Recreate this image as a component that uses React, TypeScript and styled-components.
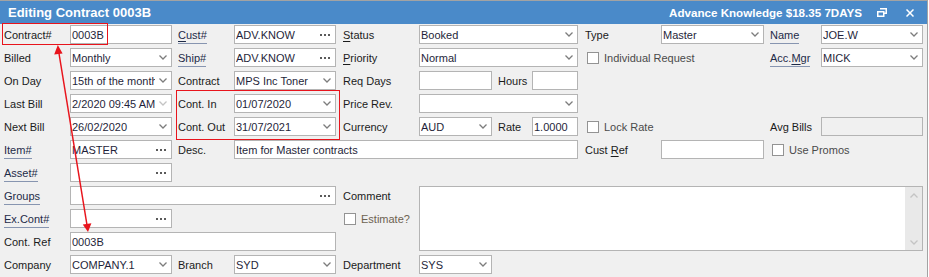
import React from "react";
import styled, { createGlobalStyle } from "styled-components";

const GlobalStyle = createGlobalStyle`
  html, body {
    margin: 0;
    padding: 0;
    background: #ffffff;
  }
  body {
    font-family: "Liberation Sans", Arial, sans-serif;
  }
`;

const colors = {
  titleBlue: "#4a8ac9",
  panel: "#f0f0f0",
  frame: "#a3a3a3",
  stroke: "#b4b4b4",
  text: "#1b1b1b",
  value: "#1f1f3a",
  link: "#1e2b48",
  linkLine: "#8795b0",
  red: "#e8141c",
};

const Window = styled.div`
  position: relative;
  width: 927px;
  height: 276px;
  box-sizing: content-box;
  border-top: 1px solid ${colors.frame};
  border-right: 1px solid ${colors.frame};
  border-bottom: 1px solid ${colors.frame};
  background: ${colors.panel};
  overflow: hidden;
`;

const TitleBar = styled.div`
  height: 23px;
  display: flex;
  align-items: center;
  padding: 0 13px 0 8px;
  background: ${colors.titleBlue};
  color: #ffffff;
`;

const TitleText = styled.div`
  flex: 1;
  font-size: 13px;
  font-weight: 700;
`;

const TitleInfo = styled.div`
  font-size: 11.6px;
  font-weight: 700;
  margin-right: 15px;
`;

const TitleButton = styled.div<{ $gap: number }>`
  height: 12px;
  display: flex;
  align-items: center;
  margin-left: ${(p) => p.$gap}px;
`;

const Form = styled.div`
  display: grid;
  grid-template-columns: 66px 102px 6px 56px 102px 7px 76px 159px 7px 76px 103px 6px 51px 102px;
  grid-template-rows: repeat(11, 19px);
  row-gap: 4px;
  padding: 1px 0 0 4px;
`;

const Label = styled.div<{ $c: string; $r: number }>`
  grid-column: ${(p) => p.$c};
  grid-row: ${(p) => p.$r};
  display: flex;
  align-items: center;
  font-size: 11px;
  color: ${colors.text};
  white-space: nowrap;
`;

const LinkText = styled.span`
  color: ${colors.link};
  border-bottom: 1px solid ${colors.linkLine};
  line-height: 13px;
  padding-bottom: 1px;
  margin-top: 3px;
`;

const Accel = styled.span`
  text-decoration: underline;
  text-underline-offset: 2px;
`;

const Field = styled.div<{ $c?: string; $r?: number; $w?: number; $disabled?: boolean }>`
  grid-column: ${(p) => p.$c ?? "auto"};
  grid-row: ${(p) => p.$r ?? "auto"};
  width: ${(p) => (p.$w ? `${p.$w}px` : "auto")};
  flex: ${(p) => (p.$w ? "none" : "1")};
  box-sizing: border-box;
  height: 19px;
  display: flex;
  align-items: center;
  border: 1px solid ${colors.stroke};
  background: ${(p) => (p.$disabled ? "#f0f0f0" : "#ffffff")};
  padding-left: 1px;
  overflow: hidden;
`;

const Value = styled.span`
  flex: 1;
  min-width: 0;
  overflow: hidden;
  white-space: nowrap;
  font-size: 11px;
  color: ${colors.value};
`;

const ArrowSlot = styled.span`
  width: 16px;
  height: 17px;
  display: flex;
  align-items: center;
  justify-content: center;
  background: #ffffff;
`;

const Dots = styled.span`
  width: 16px;
  display: flex;
  gap: 2px;
  align-items: center;
  justify-content: center;
  margin-right: 2px;

  & > i {
    width: 2px;
    height: 2px;
    background: #5a5a5a;
  }
`;

const Split = styled.div<{ $c: string; $r: number }>`
  grid-column: ${(p) => p.$c};
  grid-row: ${(p) => p.$r};
  display: flex;
  align-items: center;
`;

const SubLabel = styled.span`
  width: 40px;
  padding-left: 6px;
  box-sizing: border-box;
  font-size: 11px;
  color: ${colors.text};
`;

const Check = styled.label<{ $c: string; $r: number; $indent: number; $muted?: boolean }>`
  grid-column: ${(p) => p.$c};
  grid-row: ${(p) => p.$r};
  display: flex;
  align-items: center;
  gap: 5px;
  padding-left: ${(p) => p.$indent}px;
  font-size: 11px;
  color: ${(p) => (p.$muted ? "#6d6250" : "#4a4a4a")};
  white-space: nowrap;
`;

const Box = styled.span`
  width: 12px;
  height: 12px;
  box-sizing: border-box;
  border: 1px solid #939393;
  background: #ffffff;
`;

const Memo = styled.div`
  grid-column: 8 / 15;
  grid-row: 8 / 11;
  display: flex;
  justify-content: flex-end;
  border: 1px solid ${colors.stroke};
  background: #ffffff;
`;

const ScrollTrack = styled.div`
  width: 17px;
  display: flex;
  flex-direction: column;
  justify-content: space-between;
  align-items: center;
  padding: 6px 0 5px;
  background: #e9e9e9;
`;

const Overlay = styled.svg`
  position: absolute;
  left: 0;
  top: 0;
  width: 929px;
  height: 277px;
  pointer-events: none;
`;

const RedBox = styled.div<{ $x: number; $y: number; $w: number; $h: number }>`
  position: absolute;
  left: ${(p) => p.$x}px;
  top: ${(p) => p.$y}px;
  width: ${(p) => p.$w}px;
  height: ${(p) => p.$h}px;
  box-sizing: border-box;
  border: 1px solid ${colors.red};
  pointer-events: none;
`;

const Chevron = ({ up, dim }: { up?: boolean; dim?: boolean }) => (
  <svg width="8" height="5" viewBox="0 0 8 5">
    <path
      d={up ? "M0.5 4.5 L4 1 L7.5 4.5" : "M0.5 0.5 L4 4 L7.5 0.5"}
      fill="none"
      stroke={dim ? "#c4c4c4" : "#7d7d7d"}
      strokeWidth="1.3"
    />
  </svg>
);

type Place = { c: string; r: number };

const Select = ({ value = "", c, r, w, dim }: Partial<Place> & { value?: string; w?: number; dim?: boolean }) => (
  <Field $c={c} $r={r} $w={w}>
    <Value>{value}</Value>
    <ArrowSlot>
      <Chevron dim={dim} />
    </ArrowSlot>
  </Field>
);

const Lookup = ({ value = "", c, r }: Place & { value?: string }) => (
  <Field $c={c} $r={r}>
    <Value>{value}</Value>
    <Dots>
      <i />
      <i />
      <i />
    </Dots>
  </Field>
);

const Text = ({ value = "", c, r, w, disabled }: Partial<Place> & { value?: string; w?: number; disabled?: boolean }) => (
  <Field $c={c} $r={r} $w={w} $disabled={disabled}>
    <Value>{value}</Value>
  </Field>
);

const App = (): JSX.Element => {
  return (
    <>
      <GlobalStyle />
      <Window>
        <TitleBar>
          <TitleText>Editing Contract 0003B</TitleText>
          <TitleInfo>Advance Knowledge $18.35 7DAYS</TitleInfo>
          <TitleButton $gap={0}>
            <svg width="10" height="9" viewBox="0 0 10 9">
              <path d="M3 0.75 H9.25 V5.25 H7" fill="none" stroke="#fff" strokeWidth="1.5" />
              <rect x="0.75" y="3.75" width="6" height="4.5" fill="none" stroke="#fff" strokeWidth="1.5" />
            </svg>
          </TitleButton>
          <TitleButton $gap={19}>
            <svg width="8" height="8" viewBox="0 0 8 8">
              <path d="M0.5 0.5 L7.5 7.5 M7.5 0.5 L0.5 7.5" stroke="#fff" strokeWidth="1.5" />
            </svg>
          </TitleButton>
        </TitleBar>

        <Form>
          {/* row 1 */}
          <Label $c="1" $r={1}>Contract#</Label>
          <Text c="2" r={1} value="0003B" />
          <Label $c="4" $r={1}>
            <LinkText>
              <Accel>C</Accel>ust#
            </LinkText>
          </Label>
          <Lookup c="5" r={1} value="ADV.KNOW" />
          <Label $c="7" $r={1}>
            <span>
              <Accel>S</Accel>tatus
            </span>
          </Label>
          <Select c="8" r={1} value="Booked" />
          <Label $c="10" $r={1}>Type</Label>
          <Select c="11" r={1} value="Master" />
          <Label $c="13" $r={1}>
            <LinkText>Name</LinkText>
          </Label>
          <Select c="14" r={1} value="JOE.W" />

          {/* row 2 */}
          <Label $c="1" $r={2}>Billed</Label>
          <Select c="2" r={2} value="Monthly" />
          <Label $c="4" $r={2}>
            <LinkText>Ship#</LinkText>
          </Label>
          <Lookup c="5" r={2} value="ADV.KNOW" />
          <Label $c="7" $r={2}>
            <span>
              <Accel>P</Accel>riority
            </span>
          </Label>
          <Select c="8" r={2} value="Normal" />
          <Check $c="10 / 12" $r={2} $indent={2}>
            <Box />
            Individual Request
          </Check>
          <Label $c="13" $r={2}>
            <LinkText>
              Acc.<Accel>M</Accel>gr
            </LinkText>
          </Label>
          <Select c="14" r={2} value="MICK" />

          {/* row 3 */}
          <Label $c="1" $r={3}>On Day</Label>
          <Select c="2" r={3} value="15th of the month" />
          <Label $c="4" $r={3}>Contract</Label>
          <Select c="5" r={3} value="MPS Inc Toner" />
          <Label $c="7" $r={3}>Req Days</Label>
          <Split $c="8" $r={3}>
            <Text w={73} />
            <SubLabel>Hours</SubLabel>
            <Text />
          </Split>

          {/* row 4 */}
          <Label $c="1" $r={4}>Last Bill</Label>
          <Select c="2" r={4} value="2/2020 09:45 AM" dim />
          <Label $c="4" $r={4}>Cont. In</Label>
          <Select c="5" r={4} value="01/07/2020" />
          <Label $c="7" $r={4}>Price Rev.</Label>
          <Select c="8" r={4} />

          {/* row 5 */}
          <Label $c="1" $r={5}>Next Bill</Label>
          <Select c="2" r={5} value="26/02/2020" />
          <Label $c="4" $r={5}>Cont. Out</Label>
          <Select c="5" r={5} value="31/07/2021" />
          <Label $c="7" $r={5}>Currency</Label>
          <Split $c="8" $r={5}>
            <Select w={73} value="AUD" />
            <SubLabel>Rate</SubLabel>
            <Text value="1.0000" />
          </Split>
          <Check $c="10 / 12" $r={5} $indent={2}>
            <Box />
            Lock Rate
          </Check>
          <Label $c="13" $r={5}>Avg Bills</Label>
          <Text c="14" r={5} disabled />

          {/* row 6 */}
          <Label $c="1" $r={6}>
            <LinkText>Item#</LinkText>
          </Label>
          <Lookup c="2" r={6} value="MASTER" />
          <Label $c="4" $r={6}>Desc.</Label>
          <Text c="5 / 9" r={6} value="Item for Master contracts" />
          <Label $c="10" $r={6}>
            <span>
              Cust <Accel>R</Accel>ef
            </span>
          </Label>
          <Text c="11" r={6} />
          <Check $c="13 / 15" $r={6} $indent={2}>
            <Box />
            Use Promos
          </Check>

          {/* row 7 */}
          <Label $c="1" $r={7}>
            <LinkText>Asset#</LinkText>
          </Label>
          <Lookup c="2" r={7} />

          {/* row 8 */}
          <Label $c="1" $r={8}>
            <LinkText>Groups</LinkText>
          </Label>
          <Lookup c="2 / 6" r={8} />
          <Label $c="7" $r={8}>Comment</Label>
          <Memo>
            <ScrollTrack>
              <Chevron up dim />
              <Chevron dim />
            </ScrollTrack>
          </Memo>

          {/* row 9 */}
          <Label $c="1" $r={9}>
            <LinkText>Ex.Cont#</LinkText>
          </Label>
          <Lookup c="2" r={9} />
          <Check $c="7" $r={9} $indent={1} $muted>
            <Box />
            Estimate?
          </Check>

          {/* row 10 */}
          <Label $c="1" $r={10}>Cont. Ref</Label>
          <Text c="2 / 6" r={10} value="0003B" />

          {/* row 11 */}
          <Label $c="1" $r={11}>Company</Label>
          <Select c="2" r={11} value="COMPANY.1" />
          <Label $c="4" $r={11}>Branch</Label>
          <Select c="5" r={11} value="SYD" />
          <Label $c="7" $r={11}>Department</Label>
          <Split $c="8" $r={11}>
            <Select w={73} value="SYS" />
          </Split>
        </Form>

        {/* annotations */}
        <RedBox $x={2} $y={22} $w={106} $h={22} />
        <RedBox $x={176} $y={89} $w={164} $h={50} />
        <Overlay viewBox="0 0 929 277">
          <line x1="58.6" y1="50" x2="87" y2="224" stroke={colors.red} strokeWidth="1.5" />
          <polygon points="57.8,44 62.6,52.4 54.2,53.6" fill={colors.red} />
          <polygon points="88,231 91.4,222.2 82.8,223.6" fill={colors.red} />
        </Overlay>
      </Window>
    </>
  );
};

export default App;
